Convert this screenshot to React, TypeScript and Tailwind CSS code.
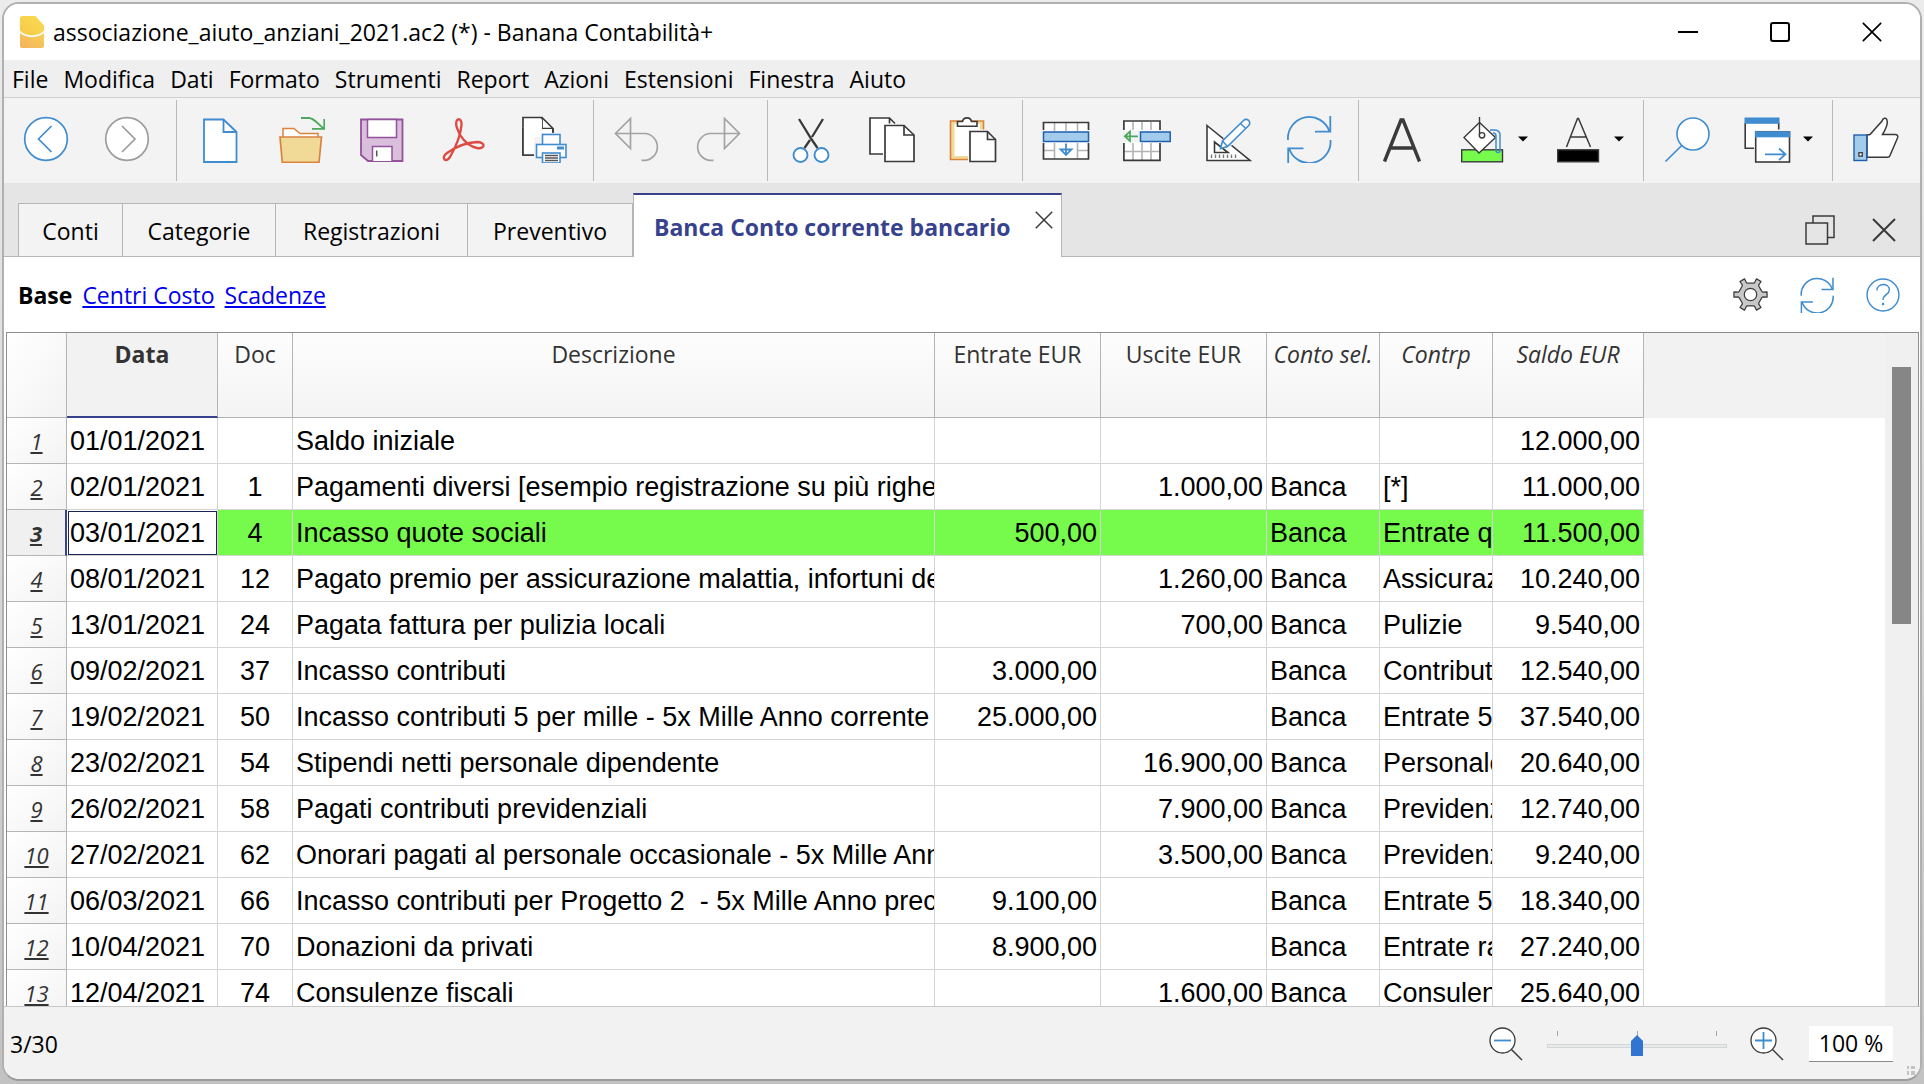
import React from "react";

const BLUE = "#3f8ccf";
const DARK = "#3a3a3a";

function Icon({ children, size = "size-12" }: { children: React.ReactNode; size?: string }) {
  return (
    <svg viewBox="0 0 48 48" fill="none" className={`${size} shrink-0`} aria-hidden="true">
      {children}
    </svg>
  );
}

function ToolButton({ label, children }: { label: string; children: React.ReactNode }) {
  return (
    <button type="button" aria-label={label} className="flex w-[81px] shrink items-center justify-center">
      <Icon>{children}</Icon>
    </button>
  );
}

function MenuToolButton({ label, children }: { label: string; children: React.ReactNode }) {
  return (
    <button type="button" aria-label={label} className="flex w-24 shrink items-center gap-3 pl-4">
      <Icon>{children}</Icon>
      <svg viewBox="0 0 10 6" className="h-[6px] w-[10px] shrink-0" aria-hidden="true">
        <path d="M0 0.5H10L5 5.5Z" fill="#000" />
      </svg>
    </button>
  );
}

function Separator() {
  return <div className="mt-[2px] mr-[2px] -mb-[2px] ml-[9px] w-px shrink-0 bg-[#b9b9b9]" />;
}

function RefreshShape({ width }: { width: number }) {
  return (
    <g stroke={BLUE} strokeWidth={width}>
      <path d="M3 25A21.3 21.3 0 0 1 44.5 16.7" />
      <path d="M45.3 1V16.7H30" />
      <path d="M45.5 25A21.3 21.3 0 0 1 4 33.3" />
      <path d="M3.2 48.5V33.3H18.5" />
    </g>
  );
}

function Cross({ className, stroke = DARK, width }: { className: string; stroke?: string; width: number }) {
  return (
    <svg viewBox="0 0 24 24" className={className} fill="none" stroke={stroke} strokeWidth={width} aria-hidden="true">
      <path d="M1 1L23 23M23 1L1 23" />
    </svg>
  );
}

function TitleBar() {
  return (
    <header className="flex h-14 shrink-0 items-center bg-white pr-[2px] pb-px pl-4">
      <svg viewBox="0 0 24 32" className="h-8 w-6 shrink-0" aria-hidden="true">
        <defs>
          <linearGradient id="appTop" x1="0" y1="1" x2="1" y2="0">
            <stop offset="0" stopColor="#f8c846" />
            <stop offset="1" stopColor="#f9dc55" />
          </linearGradient>
          <linearGradient id="appBottom" x1="0" y1="1" x2="1" y2="0">
            <stop offset="0" stopColor="#f2b35c" />
            <stop offset="1" stopColor="#f9cf55" />
          </linearGradient>
        </defs>
        <path d="M2.5 0H15.5L24 9.5V14.5C18 21 6 21 0 14.5V2.5A2.500 2.500 0 0 1 2.500 0Z" fill="url(#appTop)" />
        <path d="M0 17C6 22.500 18 22.500 24 17V29.500A2.500 2.500 0 0 1 21.500 32H2.500A2.500 2.500 0 0 1 0 29.500Z" fill="url(#appBottom)" />
      </svg>
      <h1 className="ml-[9px] flex-1 truncate text-[23px] leading-8">
        associazione_aiuto_anziani_2021.ac2 (*) - Banana Contabilità+
      </h1>
      <div className="flex">
        <button type="button" aria-label="Riduci" className="flex h-14 w-[92px] items-center justify-center">
          <svg viewBox="0 0 20 20" className="size-5" stroke="#000" strokeWidth="2" aria-hidden="true">
            <path d="M0 10H20" />
          </svg>
        </button>
        <button type="button" aria-label="Ingrandisci" className="flex h-14 w-[92px] items-center justify-center">
          <svg viewBox="0 0 20 20" className="size-5" fill="none" stroke="#000" strokeWidth="2" aria-hidden="true">
            <rect x="1" y="1" width="18" height="18" rx="2" />
          </svg>
        </button>
        <button type="button" aria-label="Chiudi" className="flex h-14 w-[92px] items-center justify-center">
          <Cross className="size-5" stroke="#000" width={2} />
        </button>
      </div>
    </header>
  );
}

const menus = ["File", "Modifica", "Dati", "Formato", "Strumenti", "Report", "Azioni", "Estensioni", "Finestra", "Aiuto"];

function MenuBar() {
  return (
    <nav className="flex h-[38px] shrink-0 items-center gap-[15px] border-b border-[#cfcfcf] bg-[#efefef] pt-px pl-2 text-[23px] leading-8">
      {menus.map((m) => (
        <button key={m} type="button">
          {m}
        </button>
      ))}
    </nav>
  );
}

function Toolbar() {
  return (
    <div className="flex h-[85px] shrink-0 overflow-hidden bg-[#f3f3f3] pb-1 pl-px">
      <ToolButton label="Indietro">
        <circle cx="24" cy="24" r="21.3" fill="#fff" stroke={BLUE} strokeWidth="1.7" />
        <path d="M29.500 11L16.500 24L29.500 37" stroke={BLUE} strokeWidth="1.700" />
      </ToolButton>
      <ToolButton label="Avanti">
        <circle cx="24" cy="24" r="21.3" fill="#fff" stroke="#9c9c9c" strokeWidth="1.700" />
        <path d="M19 11L32 24L19 37" stroke="#9c9c9c" strokeWidth="1.700" />
      </ToolButton>
      <Separator />
      <ToolButton label="Nuovo">
        <path d="M8 4.500H27.500L40.500 17V47H8Z" fill="#fff" stroke={BLUE} strokeWidth="1.800" />
        <path d="M27.500 4.500V17H40.500" stroke={BLUE} strokeWidth="1.800" />
      </ToolButton>
      <ToolButton label="Apri">
        <path d="M6 22V13.500H17L23 18.500H41V22" fill="#fff" stroke="#d9833f" strokeWidth="1.500" />
        <path d="M3 22H44.500L42 47.300H5.300Z" fill="#f1da98" stroke="#d9833f" strokeWidth="1.700" />
        <path d="M24 3H32C37 3 40 8 46.500 13.500M47.300 4V13.800H35" stroke="#4aa75c" strokeWidth="1.800" />
      </ToolButton>
      <ToolButton label="Salva">
        <path d="M3 4.500H44.500V46H10L3 40Z" fill="#d9bfdb" stroke="#93529b" strokeWidth="1.800" />
        <path d="M9.500 4.500H38.500V22.500H9.500Z" fill="#fff" stroke="#93529b" strokeWidth="1.500" />
        <path d="M14.500 46V31.500H34V46" fill="#fff" stroke="#93529b" strokeWidth="1.500" />
        <path d="M18.700 35.500V41.500" stroke="#555" strokeWidth="1.500" />
      </ToolButton>
      <ToolButton label="Esporta PDF">
        <path
          d="M18 13C14.500 3 23 1 22.500 10C21.500 22 15 35 11 42C7 48.500 1 43 8 38C17 31.500 28 27.500 38 27C47 27 46.500 34.500 38 33C27 30.500 20 20 18 13Z"
          stroke="#dd4b43"
          strokeWidth="2.400"
          strokeLinejoin="round"
        />
      </ToolButton>
      <ToolButton label="Stampa">
        <path d="M3 2.500H22L33 13.500V40H3Z" fill="#fff" stroke={DARK} strokeWidth="1.700" />
        <path d="M22 2.500V13.500H33" stroke={DARK} strokeWidth="1.700" />
        <path d="M14 22H21V17H48V48H20V43H14Z" fill="#f3f3f3" />
        <path d="M3 13V40H14V22H21V18H32V14H22V4Z" fill="#fff" />
        <path d="M14 40H3V13M33 13.500V18" stroke={DARK} strokeWidth="1.700" />
        <rect x="22.500" y="19.500" width="17.500" height="11" fill="#fff" stroke={BLUE} strokeWidth="1.600" />
        <rect x="16.500" y="29.500" width="29.500" height="13" fill="#fff" stroke={BLUE} strokeWidth="1.600" />
        <rect x="37" y="31.500" width="7" height="3" fill={BLUE} />
        <rect x="22.500" y="38" width="17.500" height="10" fill="#fff" stroke={BLUE} strokeWidth="1.600" />
        <path d="M25 40.500H38M25 43H38M25 45.500H38" stroke="#555" strokeWidth="1.300" />
      </ToolButton>
      <Separator />
      <ToolButton label="Annulla">
        <g stroke="#a3a3a3" strokeWidth="1.700">
          <path d="M17.500 3.500V33.500L2.500 18.500Z" />
          <path d="M2.500 18.500H32.500A13.500 13.500 0 0 1 32.500 45.300H28.500" />
        </g>
      </ToolButton>
      <ToolButton label="Ripeti">
        <g stroke="#a3a3a3" strokeWidth="1.700">
          <path d="M30.500 3.500V33.500L45.500 18.500Z" />
          <path d="M45.500 18.500H15.500A13.500 13.500 0 0 0 15.500 45.300H19.500" />
        </g>
      </ToolButton>
      <Separator />
      <ToolButton label="Taglia">
        <path d="M12 4L24 23.500L30.500 33M36 4L25 22M23 25L17.500 33" stroke={DARK} strokeWidth="2.300" />
        <circle cx="13.500" cy="40" r="7" fill="#fff" stroke={BLUE} strokeWidth="1.900" />
        <circle cx="34.500" cy="40" r="7" fill="#fff" stroke={BLUE} strokeWidth="1.900" />
      </ToolButton>
      <ToolButton label="Copia">
        <path d="M27 8L21.500 3H2V39H17V10H28Z" fill="#fff" />
        <path d="M27 8.500L21.500 3H2V39H15M21.500 3V8.500" stroke={DARK} strokeWidth="1.700" />
        <path d="M17 10.500H36L46 20V46.500H17Z" fill="#fff" stroke={DARK} strokeWidth="1.700" />
        <path d="M36 10.500V20H46" stroke={DARK} strokeWidth="1.700" />
      </ToolButton>
      <ToolButton label="Incolla">
        <path d="M1.500 6H34.500V44.500H1.500Z" fill="#f1da98" stroke="#d9833f" strokeWidth="1.600" />
        <path d="M5.500 9H31V41H5.500Z" fill="#fff" />
        <path d="M19 14.500H36V46H19Z" fill="#f8f8f8" />
        <path d="M8.500 6.500H13.500A4.600 4.600 0 0 1 22.500 6.500H28V11.300H8.500Z" fill="#fff" stroke={DARK} strokeWidth="1.600" />
        <path d="M21 16.500H38.500L46.500 24.500V46.500H21Z" fill="#fff" stroke={DARK} strokeWidth="1.700" />
        <path d="M38.500 16.500V24.500H46.500" stroke={DARK} strokeWidth="1.700" />
      </ToolButton>
      <Separator />
      <ToolButton label="Inserisci righe">
        <path d="M1.500 7.500H46.500V44H1.500Z" fill="#fff" />
        <path d="M12.500 8V16M24 8V16M35.500 8V16M12.500 28V44M35.500 28V44M2 35.500H12.500M35.500 35.500H46" stroke="#b3b3b3" strokeWidth="1.600" />
        <path d="M1.500 15V7.500H46.500V15M1.500 28V44H46.500V28" stroke={DARK} strokeWidth="1.700" />
        <rect x="1.500" y="17" width="45" height="9.500" fill="#a3cbec" stroke="#1f5fae" strokeWidth="1.500" />
        <path d="M24 28.500V39M18.500 34.500H29.500L24 40Z" stroke={BLUE} strokeWidth="1.800" />
      </ToolButton>
      <ToolButton label="Aggiungi riga">
        <path d="M0.800 6H37V45.500H0.800Z" fill="#fff" />
        <path d="M0 16H38V27H0Z" fill="#f3f3f3" />
        <path d="M10 7V15M19 7V15M28 7V15M10 28V45M19 28V45M28 28V45M1 36.500H37" stroke="#b3b3b3" strokeWidth="1.600" />
        <path d="M0.900 15V6H37V15M0.900 28V45.300H37V28" stroke={DARK} strokeWidth="1.700" />
        <rect x="17.500" y="17" width="29.700" height="9.500" fill="#a3cbec" stroke="#1f5fae" strokeWidth="1.500" />
        <path d="M15 21.300H3M7 16.500V26L1.800 21.300Z" stroke="#4aa75c" strokeWidth="1.700" />
      </ToolButton>
      <ToolButton label="Progettazione">
        <path d="M3 10.500L46 45.500H3Z" fill="#fff" stroke={DARK} strokeWidth="1.600" />
        <path d="M10.500 27V37.500H24Z" stroke={DARK} strokeWidth="1.600" />
        <path d="M7.500 39.500V43M11.500 39.500V43M15.500 39.500V43M19.500 39.500V43M23.500 39.500V43M27.500 39.500V43M31.500 39.500V43" stroke="#777" strokeWidth="1.400" />
        <path d="M19 24L36 8L43 14L27 31Z" fill="#f3f3f3" />
        <path d="M16.500 33.500L18.500 26L39.500 5.500A3.600 3.600 0 0 1 44.700 10.500L23.500 31.500Z" fill="#fff" stroke={BLUE} strokeWidth="1.600" />
        <path d="M18.500 26L23.500 31.500M36.500 8.500L41.700 13.500" stroke={BLUE} strokeWidth="1.500" />
      </ToolButton>
      <ToolButton label="Ricalcola">
        <RefreshShape width={1.8} />
      </ToolButton>
      <Separator />
      <ToolButton label="Carattere">
        <path d="M6.500 46.500L23 5H25L41.500 46.500M12.500 33H35.500" stroke={DARK} strokeWidth="3.400" />
      </ToolButton>
      <MenuToolButton label="Colore di sfondo">
        <rect x="3.700" y="34.800" width="40.800" height="12" fill="#76fb4c" stroke={DARK} strokeWidth="1.400" />
        <path d="M21.500 7.500L37.500 22.500L21 38L6 22.500Z" fill="#fff" stroke={DARK} strokeWidth="1.400" />
        <path d="M21.500 2V20" stroke={DARK} strokeWidth="1.400" />
        <circle cx="24" cy="20.300" r="2.700" fill="#fff" stroke={DARK} strokeWidth="1.400" />
        <path d="M32 15H36C40 15 42 17 42 20V35.500A2 2 0 0 1 38 35.500V21C38 19 37 18 35 18" stroke={BLUE} strokeWidth="1.500" />
      </MenuToolButton>
      <MenuToolButton label="Colore testo">
        <rect x="3.700" y="34.800" width="40.800" height="12" fill="#000" stroke={DARK} strokeWidth="1.400" />
        <path d="M12.500 32L23.500 3.500H24.500L36.500 32M16.500 22H32" stroke={DARK} strokeWidth="1.500" />
      </MenuToolButton>
      <Separator />
      <ToolButton label="Cerca">
        <circle cx="30" cy="19" r="16" fill="#fff" stroke={BLUE} strokeWidth="1.600" />
        <path d="M18.700 30.500L2.500 46.500" stroke={BLUE} strokeWidth="1.700" />
      </ToolButton>
      <MenuToolButton label="Finestre">
        <path d="M2 3H36V15H12V33.500H2Z" fill="#fff" />
        <path d="M2.200 8V33.300H11M35.700 8V14.500" stroke={DARK} strokeWidth="1.600" />
        <rect x="1.500" y="2.500" width="35" height="6.300" fill={BLUE} />
        <rect x="12.700" y="17" width="33.800" height="30" fill="#fff" stroke={DARK} strokeWidth="1.600" />
        <rect x="12" y="16.300" width="35.300" height="6" fill={BLUE} />
        <path d="M22 39.300H42.500M36 33.500L42.500 39.300L36 45" stroke={BLUE} strokeWidth="1.700" />
      </MenuToolButton>
      <Separator />
      <ToolButton label="Mi piace">
        <path d="M15 20L18 19.500L30 6C31 3 34 2 35 5C36 8 35 12 30.500 19.500H43C45.500 19.500 46.300 21 45.500 23L38 40.500C37.500 42 37 42.200 35.500 42.200H15Z" fill="#fff" stroke={DARK} strokeWidth="1.500" />
        <rect x="2" y="20" width="12.700" height="25.500" fill="#a3cbec" stroke="#1f5fae" strokeWidth="1.400" />
        <rect x="6.900" y="37.700" width="3.400" height="3.400" fill="#fff" stroke={DARK} strokeWidth="1.300" />
      </ToolButton>
    </div>
  );
}

const tabs = [
  { label: "Conti", width: "w-[104px]" },
  { label: "Categorie", width: "w-[153px]" },
  { label: "Registrazioni", width: "w-[192px]" },
  { label: "Preventivo", width: "w-[165px]" },
];

function TabBar() {
  return (
    <div className="flex h-[74px] shrink-0 items-stretch bg-[#e5e5e5]">
      <div className="w-[15px] border-b border-[#b5b5b5]" />
      {tabs.map((t) => (
        <div key={t.label} className={`flex flex-col border-b border-[#b5b5b5] pt-5 ${t.width}`}>
          <button type="button" className="-ml-px flex-1 border border-b-0 border-[#b5b5b5] bg-[#f3f3f3] pt-[2px] text-[23px] leading-8">
            {t.label}
          </button>
        </div>
      ))}
      <div className="flex flex-col pt-[10px]">
        <div className="flex flex-1 items-start border-x border-t-2 border-x-[#b5b5b5] border-t-[#37428f] bg-white pt-[14px] pr-2 pl-5">
          <button type="button" className="text-[23px] leading-9 font-bold text-[#37428f]">
            Banca Conto corrente bancario
          </button>
          <button type="button" aria-label="Chiudi scheda" className="ml-6 pt-[2px]">
            <Cross className="size-[18px]" width={2} />
          </button>
        </div>
      </div>
      <div className="flex flex-1 items-center justify-end gap-[37px] border-b border-[#b5b5b5] pt-5 pr-6">
        <button type="button" aria-label="Ripristina">
          <svg viewBox="0 0 30 30" className="size-[30px]" fill="none" stroke={DARK} strokeWidth="1.500" aria-hidden="true">
            <path d="M1 8H22.500V29H1ZM8 8V1H29V22.500H22.500" />
          </svg>
        </button>
        <button type="button" aria-label="Chiudi documento">
          <Cross className="size-6" width={2} />
        </button>
      </div>
    </div>
  );
}

function gearPath() {
  const points: string[] = [];
  for (let i = 0; i < 6; i++) {
    const base = i * 60;
    const at = (r: number, deg: number) => {
      const a = ((base + deg) * Math.PI) / 180;
      return `${(24 + r * Math.cos(a)).toFixed(2)} ${(24 + r * Math.sin(a)).toFixed(2)}`;
    };
    points.push(at(16, -17), at(17, -11), at(23, -9), at(23, 9), at(17, 11), at(16, 17));
  }
  return `M${points.join("L")}Z`;
}

function ViewBar() {
  return (
    <div className="flex h-[75px] shrink-0 items-center bg-white pr-5 pl-[14px] text-[23px] leading-8">
      <nav className="flex flex-1 gap-[10px]">
        <span className="font-bold">Base</span>
        <a href="#centri-costo" className="text-[#0000ee] underline">
          Centri Costo
        </a>
        <a href="#scadenze" className="text-[#0000ee] underline">
          Scadenze
        </a>
      </nav>
      <div className="flex items-center gap-[31px]">
        <button type="button" aria-label="Impostazioni">
          <Icon size="size-[35px]">
            <path d={gearPath()} fill="#c8c8c8" stroke={DARK} strokeWidth="1.700" strokeLinejoin="round" />
            <circle cx="24" cy="24" r="8.500" fill="#fff" stroke={DARK} strokeWidth="1.700" />
          </Icon>
        </button>
        <button type="button" aria-label="Aggiorna">
          <Icon size="size-[36px]">
            <RefreshShape width={2} />
          </Icon>
        </button>
        <button type="button" aria-label="Aiuto">
          <Icon size="size-[34px]">
            <circle cx="24" cy="24" r="22.500" stroke={BLUE} strokeWidth="2" />
            <path d="M15.500 17.500C15.500 6.500 33 6.500 33 16.500C33 24 24 23 24 31" stroke={BLUE} strokeWidth="2" />
            <rect x="22.500" y="35" width="3" height="3.500" fill={BLUE} />
          </Icon>
        </button>
      </div>
    </div>
  );
}

type Row = { date: string; doc: string; desc: string; inc: string; out: string; acc: string; contra: string; bal: string };

const raw: string[][] = [
  ["01/01/2021", "", "Saldo iniziale", "", "", "", "", "12.000,00"],
  ["02/01/2021", "1", "Pagamenti diversi [esempio registrazione su più righe]", "", "1.000,00", "Banca", "[*]", "11.000,00"],
  ["03/01/2021", "4", "Incasso quote sociali", "500,00", "", "Banca", "Entrate quote", "11.500,00"],
  ["08/01/2021", "12", "Pagato premio per assicurazione malattia, infortuni dei", "", "1.260,00", "Banca", "Assicurazioni", "10.240,00"],
  ["13/01/2021", "24", "Pagata fattura per pulizia locali", "", "700,00", "Banca", "Pulizie", "9.540,00"],
  ["09/02/2021", "37", "Incasso contributi", "3.000,00", "", "Banca", "Contributi", "12.540,00"],
  ["19/02/2021", "50", "Incasso contributi 5 per mille - 5x Mille Anno corrente", "25.000,00", "", "Banca", "Entrate 5x", "37.540,00"],
  ["23/02/2021", "54", "Stipendi netti personale dipendente", "", "16.900,00", "Banca", "Personale", "20.640,00"],
  ["26/02/2021", "58", "Pagati contributi previdenziali", "", "7.900,00", "Banca", "Previdenza", "12.740,00"],
  ["27/02/2021", "62", "Onorari pagati al personale occasionale - 5x Mille Anno", "", "3.500,00", "Banca", "Previdenza", "9.240,00"],
  ["06/03/2021", "66", "Incasso contributi per Progetto 2  - 5x Mille Anno precedente", "9.100,00", "", "Banca", "Entrate 5x", "18.340,00"],
  ["10/04/2021", "70", "Donazioni da privati", "8.900,00", "", "Banca", "Entrate raccolta", "27.240,00"],
  ["12/04/2021", "74", "Consulenze fiscali", "", "1.600,00", "Banca", "Consulenze", "25.640,00"],
];

const rows: Row[] = raw.map(([date, doc, desc, inc, out, acc, contra, bal]) => ({ date, doc, desc, inc, out, acc, contra, bal }));

const headers = [
  { label: "Doc", italic: false },
  { label: "Descrizione", italic: false },
  { label: "Entrate EUR", italic: false },
  { label: "Uscite EUR", italic: false },
  { label: "Conto sel.", italic: true },
  { label: "Contrp", italic: true },
  { label: "Saldo EUR", italic: true },
];

function Cell({ text, align = "text-left", active = false }: { text: string; align?: string; active?: boolean }) {
  return (
    <td
      className={`h-[46px] overflow-hidden border-r border-b border-[#d4d4d4] p-0 whitespace-pre ${
        active ? "bg-white outline-1 -outline-offset-2 outline-[#1b2456]" : ""
      }`}
    >
      <div className={`overflow-hidden px-[3px] pt-[2px] leading-[43px] ${align}`}>{text}</div>
    </td>
  );
}

function Ledger() {
  return (
    <div className="mr-px ml-[2px] flex min-h-0 flex-1 border-t border-l border-[#8e8e8e] bg-white">
      <div className="min-w-0 flex-1 overflow-hidden">
        <table id="ledger" className="w-full table-fixed border-separate border-spacing-0 font-['Liberation_Sans',Arial,sans-serif] text-[27px]">
          <colgroup>
            <col className="w-[60px]" />
            <col className="w-[151px]" />
            <col className="w-[75px]" />
            <col className="w-[642px]" />
            <col className="w-[166px]" />
            <col className="w-[166px]" />
            <col className="w-[113px]" />
            <col className="w-[113px]" />
            <col className="w-[151px]" />
            <col />
          </colgroup>
          <thead className="font-['Open_Sans','Noto_Sans',sans-serif] text-[23px] leading-8 text-[#333]">
            <tr className="h-[85px]">
              <td className="border-r border-b border-[#b5b5b5] bg-linear-to-br from-white to-[#f3f3f3]" />
              <th scope="col" className="border-r border-b-2 border-r-[#b5b5b5] border-b-[#37428f] bg-[#f2f2f2] p-0 pt-[5px] align-top font-bold">
                Data
              </th>
              {headers.map((h) => (
                <th
                  key={h.label}
                  scope="col"
                  className={`border-r border-b border-[#b5b5b5] bg-linear-to-b from-[#fdfdfd] to-[#f4f4f4] p-0 pt-[5px] align-top font-normal whitespace-nowrap ${
                    h.italic ? "italic" : ""
                  }`}
                >
                  {h.label}
                </th>
              ))}
              <td className="bg-[#f2f2f2]" />
            </tr>
          </thead>
          <tbody>
            {rows.map((r, i) => {
              const current = i === 2;
              return (
                <tr key={r.date} className={current ? "bg-[#76fb4c]" : ""}>
                  <th
                    scope="row"
                    className={`border-r border-b border-[#b5b5b5] p-0 text-center font-['Open_Sans','Noto_Sans',sans-serif] text-[22px] leading-8 text-[#333] italic underline ${
                      current
                        ? "border-r-2 border-r-[#37428f] bg-[#f0f0f0] font-bold"
                        : "bg-linear-to-br from-white to-[#f3f3f3] font-normal"
                    }`}
                  >
                    {i + 1}
                  </th>
                  <Cell text={r.date} active={current} />
                  <Cell text={r.doc} align="text-center" />
                  <Cell text={r.desc} />
                  <Cell text={r.inc} align="text-right" />
                  <Cell text={r.out} align="text-right" />
                  <Cell text={r.acc} />
                  <Cell text={r.contra} />
                  <Cell text={r.bal} align="text-right" />
                  <td className="bg-white" />
                </tr>
              );
            })}
          </tbody>
        </table>
      </div>
      <div className="flex w-[34px] shrink-0 flex-col border-r border-[#8e8e8e] bg-[#f0f0f0] px-[7px] pt-[34px]">
        <div role="scrollbar" aria-controls="ledger" aria-orientation="vertical" aria-valuenow={0} className="h-[257px] bg-[#868686]" />
      </div>
    </div>
  );
}

function Magnifier({ plus }: { plus: boolean }) {
  return (
    <svg viewBox="0 0 34 34" className="size-[34px]" fill="none" aria-hidden="true">
      <circle cx="13.500" cy="13.500" r="12.500" fill="#fff" stroke={DARK} strokeWidth="1.300" />
      <path d="M22.500 22.500L33 33" stroke={DARK} strokeWidth="1.500" />
      <path d={plus ? "M5 13.500H22M13.500 5V22" : "M5 13.500H22"} stroke={BLUE} strokeWidth="1.800" />
    </svg>
  );
}

function StatusBar() {
  return (
    <footer className="relative flex h-[73px] shrink-0 items-center border-t border-[#c8c8c8] bg-[#f2f2f2] pt-px pr-[27px] pl-[6px] text-[23px] leading-8">
      <span className="flex-1">3/30</span>
      <button type="button" aria-label="Riduci zoom">
        <Magnifier plus={false} />
      </button>
      <div className="mr-[23px] ml-6 flex w-[180px] flex-col">
        <div className="flex justify-between px-[10px]">
          <span className="h-[5px] w-px bg-[#a5a398]" />
          <span className="h-[5px] w-px bg-[#a5a398]" />
          <span className="h-[5px] w-px bg-[#a5a398]" />
        </div>
        <input
          type="range"
          aria-label="Zoom"
          min={0}
          max={200}
          defaultValue={100}
          className="h-[21px] w-full appearance-none bg-transparent [&::-webkit-slider-runnable-track]:h-1 [&::-webkit-slider-runnable-track]:border [&::-webkit-slider-runnable-track]:border-[#d3d6d5] [&::-webkit-slider-runnable-track]:bg-[#e7eaea] [&::-webkit-slider-thumb]:-mt-[10px] [&::-webkit-slider-thumb]:h-[21px] [&::-webkit-slider-thumb]:w-3 [&::-webkit-slider-thumb]:appearance-none [&::-webkit-slider-thumb]:bg-[#3275d1] [&::-webkit-slider-thumb]:[clip-path:polygon(0_28%,50%_0,100%_28%,100%_100%,0_100%)]"
        />
      </div>
      <button type="button" aria-label="Aumenta zoom">
        <Magnifier plus />
      </button>
      <input
        type="text"
        aria-label="Percentuale zoom"
        defaultValue="100 %"
        className="ml-[25px] h-9 w-[84px] border-b border-[#8a8a8a] bg-white text-center"
      />
      <svg viewBox="0 0 8 9" className="absolute right-[5px] bottom-1 h-[9px] w-2" fill="#c3c3c3" aria-hidden="true">
        <path d="M0 0H2V3H0ZM4 0H8V3H4ZM0 5H2V9H0ZM4 5H8V9H4Z" />
      </svg>
    </footer>
  );
}

export default function App() {
  return (
    <div className="h-screen overflow-hidden bg-linear-to-b from-[#ececec] via-[#d8d8d8] to-[#c2c2c2] px-[2px] pt-[2px] pb-[3px] font-['Open_Sans','Noto_Sans',sans-serif] text-black">
      <div className="flex h-full flex-col overflow-hidden rounded-[17px] border-2 border-[#b0b0b0] border-b-[#9c9c9c] bg-white">
        <TitleBar />
        <MenuBar />
        <Toolbar />
        <TabBar />
        <ViewBar />
        <Ledger />
        <StatusBar />
      </div>
    </div>
  );
}
